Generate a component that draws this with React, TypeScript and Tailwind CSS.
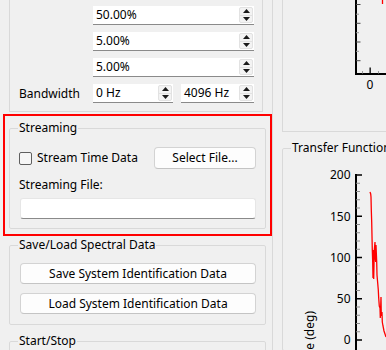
import React from 'react'

function Arrow({ up }: { up?: boolean }) {
  return (
    <svg width="7" height="4" viewBox="0 0 7 4" className="block">
      <path d={up ? 'M0 4 L3.5 0 L7 4 Z' : 'M0 0 L7 0 L3.5 4 Z'} fill="#1a1a1a" />
    </svg>
  )
}

function SpinBox({ value, className = '' }: { value: string; className?: string }) {
  return (
    <div className={`flex h-[19px] bg-white border-b border-[#8a8a8a] ${className}`}>
      <span className="flex-1 pl-[3px] leading-[18px] whitespace-nowrap">{value}</span>
      <div className="w-[14px] h-[16px] mt-[1px] mr-[1px] flex flex-col border border-[#e2e2e2] bg-[#f3f3f3] rounded-[2px]">
        <div className="flex-1 flex items-center justify-center border-b border-[#e2e2e2]">
          <Arrow up />
        </div>
        <div className="flex-1 flex items-center justify-center">
          <Arrow />
        </div>
      </div>
    </div>
  )
}

function PushButton({ children, className = '' }: { children: React.ReactNode; className?: string }) {
  return (
    <div
      className={`h-[21px] flex items-center justify-center rounded-[4px] border border-[#d3d3d3] border-b-[#c4c4c4] bg-[#fdfdfd] leading-[16px] whitespace-nowrap ${className}`}
    >
      {children}
    </div>
  )
}

const phase: [number, number][] = [
  [370, 192], [370.7, 194], [371, 197], [371.3, 210], [371.7, 222], [372.3, 250], [372.7, 262],
  [373, 278], [373.3, 250], [373.7, 279], [374.3, 250], [375, 242], [375.3, 258], [375.7, 262],
  [376, 245], [376.7, 262], [377, 275], [377.7, 283], [378.3, 290], [378.7, 298], [379.3, 306],
  [380, 308], [380.3, 318], [381, 297], [381.3, 316], [382, 312], [382.3, 322], [383, 326],
  [384, 331], [385, 334], [386, 337],
]

export default function App() {
  const majors = [200, 150, 100, 50, 0]
  const minors: number[] = []
  for (let v = 0; v <= 200; v += 10) if (v % 50 !== 0) minors.push(v)
  const yOf = (v: number) => 340 - v * 0.825

  return (
    <div
      className="relative w-[386px] h-[350px] overflow-hidden bg-[#f0f0f0] text-[12px] text-black flex"
      style={{ fontFamily: '"Noto Sans", "Open Sans", sans-serif' }}
    >
      {/* left settings column */}
      <div className="w-[273px] h-[350px] border-r border-[#d9d9d9] shrink-0">
        {/* parameters group (continues above) */}
        <div className="ml-[9px] w-[254px] h-[112px] border-x border-b border-[#d9d9d9] pl-[9px] pt-[6px] flex flex-col gap-[7px]">
          <div className="flex items-center">
            <span className="w-[74px]" />
            <SpinBox value="50.00%" className="w-[161px]" />
          </div>
          <div className="flex items-center">
            <span className="w-[74px]" />
            <SpinBox value="5.00%" className="w-[161px]" />
          </div>
          <div className="flex items-center">
            <span className="w-[74px]" />
            <SpinBox value="5.00%" className="w-[161px]" />
          </div>
          <div className="flex items-center">
            <span className="w-[74px] leading-[16px]">Bandwidth</span>
            <SpinBox value="0 Hz" className="w-[80px]" />
            <SpinBox value="4096 Hz" className="w-[73px] ml-[8px]" />
          </div>
        </div>

        {/* Streaming */}
        <fieldset className="ml-[9px] mt-[8px] w-[257px] border border-[#d9d9d9] rounded-[2px]">
          <legend className="ml-[8px] px-[1px] leading-[16px]">Streaming</legend>
          <div className="pl-[9px] pr-[9px] pb-[9px]">
            <div className="mt-[11px] h-[22px] flex items-center">
              <div className="w-[13px] h-[13px] rounded-[2px] border border-[#5f5f5f] bg-[#f6f6f6]" />
              <span className="ml-[5px] leading-[16px]">Stream Time Data</span>
              <PushButton className="ml-auto w-[102px] h-[22px]">Select File...</PushButton>
            </div>
            <div className="mt-[8px] leading-[16px]">Streaming File:</div>
            <div className="mt-[5px] ml-[1px] h-[21px] bg-white border border-[#e6e6e6] border-b-[#8a8a8a] rounded-[3px]" />
          </div>
        </fieldset>

        {/* Save / Load */}
        <fieldset className="ml-[9px] mt-[8px] w-[257px] border border-[#d9d9d9] rounded-[2px]">
          <legend className="ml-[8px] px-[1px] leading-[16px]">Save/Load Spectral Data</legend>
          <div className="pl-[10px] pr-[9px] pb-[10px] flex flex-col gap-[9px]">
            <PushButton className="mt-[10px]">Save System Identification Data</PushButton>
            <PushButton>Load System Identification Data</PushButton>
          </div>
        </fieldset>

        {/* Start / Stop */}
        <fieldset className="ml-[9px] mt-[8px] w-[257px] h-[60px] border border-[#d9d9d9] rounded-[2px]">
          <legend className="ml-[8px] px-[1px] leading-[16px]">Start/Stop</legend>
        </fieldset>
      </div>

      {/* right plots column */}
      <div className="w-[113px] h-[350px] overflow-hidden pl-[9px] shrink-0">
        <div className="w-[140px] h-[132px] border-l border-b border-[#d9d9d9]">
          <svg width="103" height="131" viewBox="283 0 103 131" className="block">
            <rect x="355" y="0" width="2" height="75" fill="#000" />
            <rect x="355" y="73" width="31" height="2" fill="#000" />
            {[4.5, 23.3, 42, 60.7].map((y) => (
              <rect key={y} x="356" y={y - 0.5} width="4.5" height="1" fill="#4a4a4a" />
            ))}
            {[14.2, 32.7, 51.3].map((y) => (
              <rect key={y} x="356" y={y - 0.5} width="3" height="1" fill="#9a9a9a" />
            ))}
            <rect x="369.5" y="67.5" width="1.3" height="6" fill="#000" />
            <rect x="362" y="71" width="1" height="2.5" fill="#9a9a9a" />
            <rect x="378" y="71" width="1" height="2.5" fill="#9a9a9a" />
            <text x="370" y="88.5" textAnchor="middle" fontSize="12" fill="#000" fontFamily="Noto Sans, sans-serif">
              0
            </text>
            <line x1="382.5" y1="0" x2="382.5" y2="4" stroke="#ff0000" strokeWidth="1.3" />
          </svg>
        </div>

        <fieldset className="mt-[8px] w-[200px] border border-[#d9d9d9] rounded-[2px]">
          <legend className="ml-[8px] px-[1px] leading-[16px] whitespace-nowrap">Transfer Function Phase</legend>
          <svg width="103" height="194" viewBox="283 156 103 194" className="block">
            <rect x="355" y="174" width="2" height="180" fill="#000" />
            {majors.map((v) => (
              <g key={v}>
                <rect x="356" y={yOf(v) - 0.75} width="6" height="1.5" fill="#000" />
                <text
                  x="350.5"
                  y={yOf(v) + 4.3}
                  textAnchor="end"
                  fontSize="12"
                  fill="#000"
                  fontFamily="Noto Sans, sans-serif"
                >
                  {v}
                </text>
              </g>
            ))}
            {minors.map((v) => (
              <rect key={v} x="356" y={yOf(v) - 0.5} width="4" height="1" fill="#8c8c8c" />
            ))}
            <text
              transform="translate(313.5,311) rotate(-90)"
              textAnchor="end"
              fontSize="12"
              fill="#000"
              fontFamily="Noto Sans, sans-serif"
            >
              Phase (deg)
            </text>
            <polyline
              points={phase.map((p) => p.join(',')).join(' ')}
              fill="none"
              stroke="#ff0000"
              strokeWidth="1.3"
            />
          </svg>
        </fieldset>
      </div>

      {/* highlight annotation */}
      <div className="absolute left-[3px] top-[114px] w-[269px] h-[122px] border-2 border-[#ff0000] pointer-events-none" />
    </div>
  )
}
